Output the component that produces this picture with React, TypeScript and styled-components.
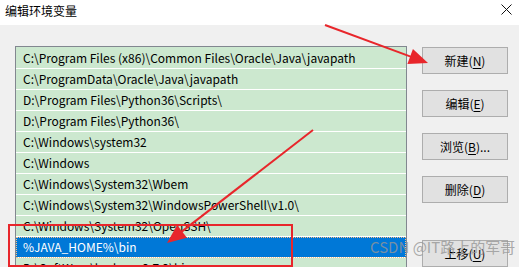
import React from 'react';
import styled, { createGlobalStyle } from 'styled-components';

const GlobalStyle = createGlobalStyle`
  html, body {
    margin: 0;
    padding: 0;
  }
  body {
    width: 519px;
    height: 267px;
    overflow: hidden;
    font-family: "Noto Sans CJK SC", "Noto Sans", sans-serif;
  }
`;

const paths = [
  'C:\\Program Files (x86)\\Common Files\\Oracle\\Java\\javapath',
  'C:\\ProgramData\\Oracle\\Java\\javapath',
  'D:\\Program Files\\Python36\\Scripts\\',
  'D:\\Program Files\\Python36\\',
  'C:\\Windows\\system32',
  'C:\\Windows',
  'C:\\Windows\\System32\\Wbem',
  'C:\\Windows\\System32\\WindowsPowerShell\\v1.0\\',
  'C:\\Windows\\System32\\OpenSSH\\',
  '%JAVA_HOME%\\bin',
  'D:\\SoftWare\\hadoop-2.7.2\\bin',
];

const buttons = [
  { label: '新建', key: 'N', after: '' },
  { label: '编辑', key: 'E', after: '' },
  { label: '浏览', key: 'B', after: '...' },
  { label: '删除', key: 'D', after: '' },
];

// 화살표 한 개를 그려주는 함수
const Arrow = ({ x1, y1, x2, y2 }: { x1: number; y1: number; x2: number; y2: number }) => {
  const len = Math.hypot(x2 - x1, y2 - y1);
  const ux = (x2 - x1) / len;
  const uy = (y2 - y1) / len;
  const headLen = 19;
  const headW = 8;
  const bx = x2 - ux * headLen;
  const by = y2 - uy * headLen;
  const pts = `${x2},${y2} ${bx - uy * headW},${by + ux * headW} ${bx + uy * headW},${by - ux * headW}`;
  return (
    <>
      <line x1={x1} y1={y1} x2={bx + ux * 2} y2={by + uy * 2} stroke="#e8262b" strokeWidth={2} />
      <polygon points={pts} fill="#e8262b" />
    </>
  );
};

const App = () => {
  return (
    <>
      <GlobalStyle />
      <Window>
        <TitleBar>
          <Title>编辑环境变量</Title>
          <CloseIcon viewBox="0 0 11 11">
            <path d="M0.5 0.5 L10.5 10.5 M10.5 0.5 L0.5 10.5" stroke="#111" strokeWidth={1} />
          </CloseIcon>
        </TitleBar>
        <Body>
          <PathList>
            {paths.map((p, i) => (
              <PathRow key={p} $selected={i === 9}>
                {p}
              </PathRow>
            ))}
          </PathList>
          <ButtonColumn>
            {buttons.map((b) => (
              <DialogButton key={b.key}>
                {b.label}(<u>{b.key}</u>){b.after}
              </DialogButton>
            ))}
            <MoveButton>
              上移(<u>U</u>)
            </MoveButton>
          </ButtonColumn>
        </Body>
        <Annotations viewBox="0 0 519 267">
          <Arrow x1={325} y1={25} x2={428} y2={63} />
          <Arrow x1={313} y1={130} x2={167} y2={243} />
          <rect x={9} y={225} width={283} height={41} fill="none" stroke="#e8262b" strokeWidth={2} />
        </Annotations>
        <Watermark>CSDN @IT路上的军哥</Watermark>
      </Window>
    </>
  );
};

export default App;

const Window = styled.div`
  position: relative;
  width: 519px;
  height: 267px;
  overflow: hidden;
  background-color: #f0f0f0;
  display: flex;
  flex-direction: column;
`;

const TitleBar = styled.div`
  height: 25px;
  flex-shrink: 0;
  background-color: #ffffff;
  display: flex;
  justify-content: space-between;
  align-items: center;
  padding: 0 7px 0 5px;
`;

const Title = styled.div`
  font-size: 12px;
  color: #000000;
  margin-top: -5px;
`;

const CloseIcon = styled.svg`
  width: 11px;
  height: 11px;
  margin-top: -6px;
`;

const Body = styled.div`
  display: flex;
  align-items: flex-start;
  padding: 21px 0 0 15px;
  gap: 15px;
`;

const PathList = styled.div`
  width: 390px;
  height: 240px;
  flex-shrink: 0;
  border: 1px solid #828790;
  border-bottom: none;
  background-color: #cce8cf;
  padding-top: 1px;
`;

const PathRow = styled.div<{ $selected?: boolean }>`
  height: 20px;
  line-height: 20px;
  border-bottom: 1px solid #ffffff;
  padding-left: 7px;
  font-size: 12px;
  white-space: nowrap;
  overflow: hidden;
  color: ${(p) => (p.$selected ? '#ffffff' : '#000000')};
  background-color: ${(p) => (p.$selected ? '#0078d7' : 'transparent')};
  outline: ${(p) => (p.$selected ? '1px dotted #f5c38a' : 'none')};
  outline-offset: -1px;
`;

const ButtonColumn = styled.div`
  display: flex;
  flex-direction: column;
  gap: 16px;
  padding-top: 1px;
`;

const DialogButton = styled.button`
  width: 86px;
  height: 27px;
  padding: 0;
  background-color: #e1e1e1;
  border: 1px solid #adadad;
  border-radius: 0;
  font-family: "Noto Sans CJK SC", "Noto Sans", sans-serif;
  font-size: 12px;
  color: #000000;
  u {
    text-underline-offset: 2px;
  }
`;

const MoveButton = styled(DialogButton)`
  margin-top: 21px;
`;

const Annotations = styled.svg`
  position: absolute;
  left: 0;
  top: 0;
  width: 519px;
  height: 267px;
  pointer-events: none;
`;

const Watermark = styled.div`
  position: absolute;
  left: 370px;
  top: 236px;
  font-family: "Noto Sans CJK SC", "Noto Sans", sans-serif;
  font-size: 15px;
  color: rgba(150, 150, 150, 0.8);
  white-space: nowrap;
  pointer-events: none;
`;
